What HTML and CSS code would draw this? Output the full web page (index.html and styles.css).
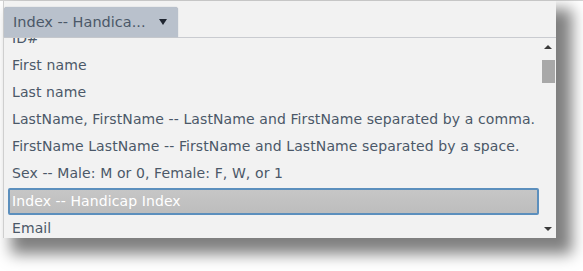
FILE: index.html
```html
<!DOCTYPE html>
<html lang="en">
<head>
    <meta charset="UTF-8">
    <meta name="viewport" content="width=device-width, initial-scale=1.0">
    <title>Field picker</title>
    <link rel="stylesheet" href="styles.css">
</head>
<body>
    <div class="page">
        <!-- Panel with the field dropdown -->
        <div class="panel">
            <div class="panel-head">
                <div class="field-btn">
                    <span>Index -- Handica...</span>
                    <span class="caret"></span>
                </div>
            </div>

            <div class="list-wrap">
                <div class="list">
                    <div class="list-inner">
                        <div class="item">ID#</div>
                        <div class="item">First name</div>
                        <div class="item">Last name</div>
                        <div class="item">LastName, FirstName -- LastName and FirstName separated by a comma.</div>
                        <div class="item">FirstName LastName -- FirstName and LastName separated by a space.</div>
                        <div class="item">Sex -- Male: M or 0, Female: F, W, or 1</div>
                        <div class="item selected">Index -- Handicap Index</div>
                        <div class="item">Email</div>
                    </div>
                </div>

                <!-- Scrollbar -->
                <div class="scrollbar">
                    <span class="arrow up"></span>
                    <span class="thumb"></span>
                    <span class="track"></span>
                    <span class="arrow down"></span>
                </div>
            </div>
        </div>
    </div>
</body>
</html>
```

FILE: styles.css
```css
html, body {
    height: 100%;
}
body {
    margin: 0;
    background-color: #fff;
    font-family: "DejaVu Sans", Verdana, sans-serif;
    font-size: 14px;
    letter-spacing: 0.1px;
    color: #4b5868;
}
.page {
    display: flex;
    border-top: 1px solid #d4d4d4;
    padding-left: 3px;
}
.panel {
    width: 552px;
    height: 237px;
    background-color: #f2f2f2;
    border-left: 1px solid #cfcfcf;
    box-shadow: 12px 12px 14px 4px rgba(0, 0, 0, 0.5);
    display: flex;
    flex-direction: column;
}
.panel-head {
    height: 35px;
    border-bottom: 1px solid #c9cbd0;
    display: flex;
    align-items: flex-end;
    padding-top: 1px;
}
.field-btn {
    width: 165px;
    height: 30px;
    padding-left: 9px;
    background-color: #b9c1cc;
    border-radius: 3px 3px 0 0;
    box-shadow: 0 0 1px #9aa2ad;
    display: flex;
    align-items: center;
    font-size: 14.5px;
    letter-spacing: 0;
    color: #4b5868;
}
.caret {
    margin-left: 13px;
    width: 0;
    height: 0;
    border-left: 4px solid transparent;
    border-right: 4px solid transparent;
    border-top: 6px solid #1f2530;
}
.list-wrap {
    flex: 1;
    display: flex;
    overflow: hidden;
}
.list {
    flex: 1;
    overflow: hidden;
    padding-left: 4px;
    padding-right: 1px;
}
.list-inner {
    margin-top: -13px;
}
.item {
    height: 27px;
    line-height: 27px;
    padding-left: 4px;
    white-space: nowrap;
}
.item.selected {
    height: 23px;
    line-height: 23px;
    margin-top: 1px;
    background: linear-gradient(#c6c6c6, #bdbdbd);
    border: 2px solid #5c8fbd;
    border-radius: 2px;
    padding-left: 2px;
    color: #fff;
}
.scrollbar {
    width: 16px;
    display: flex;
    flex-direction: column;
    align-items: center;
}
.arrow {
    width: 0;
    height: 0;
    border-left: 4px solid transparent;
    border-right: 4px solid transparent;
}
.arrow.up {
    margin-top: 7px;
    border-bottom: 4px solid #3a3a3a;
}
.thumb {
    margin-top: 11px;
    width: 13px;
    height: 23px;
    background-color: #a8a8a8;
}
.track {
    flex: 1;
}
.arrow.down {
    margin-bottom: 7px;
    border-top: 4px solid #3a3a3a;
}
```
